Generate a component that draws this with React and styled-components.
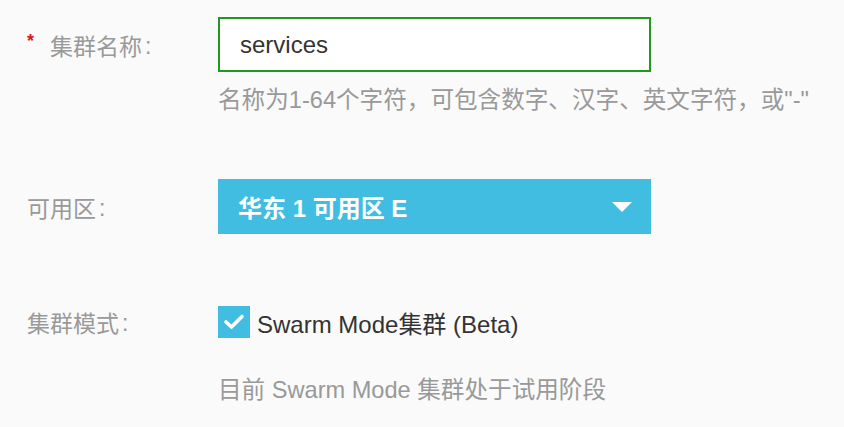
import React, { useState } from "react";
import styled, { createGlobalStyle } from "styled-components";

const GlobalStyle = createGlobalStyle`
  html, body {
    margin: 0;
    padding: 0;
    background: #fafafa;
  }
  body {
    font-family: "Liberation Sans", Arial, "Noto Sans CJK SC", sans-serif;
  }
`;

function App() {
  const [name, setName] = useState("services");
  const [swarm, setSwarm] = useState(true);

  return (
    <>
      <GlobalStyle />
      <Form>
        <Row>
          <Label>
            <Star>*</Star>集群名称<Colon>:</Colon>
          </Label>
          <Field>
            <Input value={name} onChange={(e) => setName(e.target.value)} />
            <Help>名称为1-64个字符，可包含数字、汉字、英文字符，或"-"</Help>
          </Field>
        </Row>

        <Row $top={62}>
          <Label>可用区<Colon>:</Colon></Label>
          <Field>
            <Select>
              <span>华东 1 可用区 E</span>
              <Caret />
            </Select>
          </Field>
        </Row>

        <Row $top={72}>
          <Label $h={32}>集群模式<Colon>:</Colon></Label>
          <Field>
            <Check onClick={() => setSwarm(!swarm)}>
              <Box $on={swarm}>
                {swarm && (
                  <svg width="22" height="18" viewBox="0 0 22 18">
                    <polyline
                      points="3,9 8.5,14 19,3.5"
                      fill="none"
                      stroke="#fff"
                      strokeWidth="3.6"
                      strokeLinecap="round"
                      strokeLinejoin="round"
                    />
                  </svg>
                )}
              </Box>
              Swarm Mode集群 (Beta)
            </Check>
            <Help $gap={35}>目前 Swarm Mode 集群处于试用阶段</Help>
          </Field>
        </Row>
      </Form>
    </>
  );
}

const Form = styled.div`
  padding-top: 17px;
`;

const Row = styled.div`
  display: grid;
  grid-template-columns: 218px 433px;
  align-items: start;
  margin-top: ${(p) => p.$top || 0}px;
`;

const Label = styled.div`
  height: ${(p) => p.$h || 55}px;
  display: flex;
  align-items: center;
  padding-left: 27px;
  font-size: 23px;
  color: #999;
  white-space: nowrap;
`;

const Colon = styled.span`
  margin-left: 3px;
  padding-top: 3px;
`;

const Star = styled.span`
  color: #e0141e;
  font-size: 18px;
  font-weight: bold;
  width: 23px;
  margin-top: -6px;
`;

const Field = styled.div`
  display: flex;
  flex-direction: column;
`;

const Input = styled.input`
  box-sizing: border-box;
  width: 433px;
  height: 55px;
  border: 2px solid #1f9a1f;
  background: #fff;
  padding: 0 20px;
  font-family: inherit;
  font-size: 24px;
  color: #333;
  &:focus {
    outline: none;
  }
`;

const Help = styled.div`
  margin-top: ${(p) => p.$gap || 11}px;
  font-size: 23.6px;
  line-height: 34px;
  color: #999;
  white-space: nowrap;
`;

const Select = styled.div`
  box-sizing: border-box;
  height: 55px;
  background: #41bde2;
  display: flex;
  align-items: center;
  justify-content: space-between;
  padding: 0 19px 0 20px;
  color: #fff;
  font-size: 24px;
  font-weight: bold;
  cursor: pointer;
`;

const Caret = styled.span`
  width: 0;
  height: 0;
  border-left: 10px solid transparent;
  border-right: 10px solid transparent;
  border-top: 10px solid #fff;
`;

const Check = styled.label`
  height: 32px;
  display: flex;
  align-items: center;
  gap: 7px;
  font-size: 24px;
  color: #333;
  cursor: pointer;
`;

const Box = styled.span`
  width: 32px;
  height: 32px;
  background: ${(p) => (p.$on ? "#41bde2" : "#fff")};
  display: flex;
  align-items: center;
  justify-content: center;
`;

export default App;
